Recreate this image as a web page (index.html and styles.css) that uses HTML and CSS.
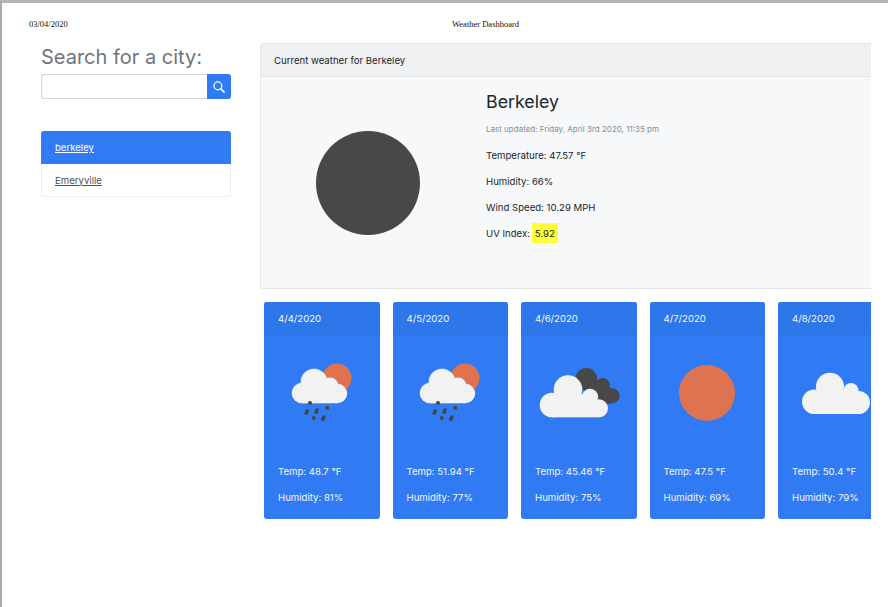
FILE: index.html
```html
<!DOCTYPE html>
<html lang="en">
<head>
  <meta charset="UTF-8">
  <title>Weather Dashboard</title>
  <link rel="stylesheet" href="styles.css">
</head>
<body>
  <svg class="defs" width="0" height="0" aria-hidden="true">
    <defs>
      <g id="sun-rain">
        <circle cx="50" cy="20" r="14.5" fill="#dd7350"/>
        <circle cx="27" cy="24" r="13.6" fill="#fff" opacity="0.5"/>
        <g fill="#f2f2f2">
          <circle cx="15" cy="35" r="10.3"/>
          <circle cx="27" cy="24" r="13"/>
          <circle cx="43" cy="28" r="8.5"/>
          <circle cx="50.5" cy="35.5" r="9.7"/>
          <rect x="15" y="30" width="35.5" height="15.3"/>
        </g>
        <g fill="#464649">
          <circle cx="23" cy="45" r="2"/>
          <rect x="18" y="51" width="3.4" height="6" rx="1.4" transform="rotate(25 19.7 54)"/>
          <rect x="28" y="50" width="3.4" height="6" rx="1.4" transform="rotate(25 29.7 53)"/>
          <circle cx="40.3" cy="49.7" r="2"/>
          <circle cx="26.7" cy="60" r="2"/>
          <rect x="34.6" y="57.3" width="3.4" height="6" rx="1.4" transform="rotate(25 36.3 60.3)"/>
        </g>
      </g>
    </defs>
  </svg>

  <header class="topbar">
    <span class="topbar-date">03/04/2020</span>
    <span class="topbar-title">Weather Dashboard</span>
  </header>

  <div class="page">
    <aside class="sidebar">
      <h2 class="search-title">Search for a city:</h2>
      <form class="search-row">
        <input class="search-input" type="text" aria-label="City">
        <button class="search-btn" type="button" aria-label="Search">
          <svg width="12" height="12" viewBox="0 0 16 16" fill="none" stroke="#fff" stroke-width="1.7" stroke-linecap="round">
            <circle cx="6.5" cy="6.5" r="5.2"/>
            <path d="M10.5 10.5 L15 15" stroke-width="2.1"/>
          </svg>
        </button>
      </form>
      <ul class="city-list">
        <li class="city city-active"><a href="#">berkeley</a></li>
        <li class="city"><a href="#">Emeryville</a></li>
      </ul>
    </aside>

    <main class="content">
      <section class="current">
        <div class="current-head">Current weather for Berkeley</div>
        <div class="current-body">
          <div class="current-icon">
            <svg width="106" height="106" viewBox="0 0 106 106"><circle cx="53" cy="53" r="52" fill="#48484a"/></svg>
          </div>
          <div class="current-info">
            <h3 class="city-name">Berkeley</h3>
            <p class="updated">Last updated: Friday, April 3rd 2020, 11:35 pm</p>
            <p class="stat">Temperature: 47.57 °F</p>
            <p class="stat">Humidity: 66%</p>
            <p class="stat">Wind Speed: 10.29 MPH</p>
            <p class="stat">UV Index: <span class="uv">5.92</span></p>
          </div>
        </div>
      </section>

      <section class="forecast">
        <article class="day">
          <div class="day-head">4/4/2020</div>
          <div class="day-icon">
            <svg width="70" height="70" viewBox="0 0 70 70"><use href="#sun-rain"/></svg>
          </div>
          <p class="day-stat">Temp: 48.7 °F</p>
          <p class="day-stat">Humidity: 81%</p>
        </article>
        <article class="day">
          <div class="day-head">4/5/2020</div>
          <div class="day-icon">
            <svg width="70" height="70" viewBox="0 0 70 70"><use href="#sun-rain"/></svg>
          </div>
          <p class="day-stat">Temp: 51.94 °F</p>
          <p class="day-stat">Humidity: 77%</p>
        </article>
        <article class="day">
          <div class="day-head">4/6/2020</div>
          <div class="day-icon">
            <svg width="90" height="70" viewBox="0 0 90 70">
              <g fill="#48484a">
                <circle cx="52.2" cy="21" r="11"/>
                <circle cx="68.8" cy="27" r="7"/>
                <circle cx="78.2" cy="37.7" r="7.5"/>
                <path d="M45 25 L68 22 L78 31 L78 45 L60 50 Z"/>
              </g>
              <g fill="#f2f2f2">
                <circle cx="18" cy="47" r="12.3"/>
                <circle cx="34" cy="31.6" r="14.3"/>
                <circle cx="56" cy="39" r="8.2"/>
                <circle cx="65" cy="50.3" r="9"/>
                <rect x="34" y="36" width="22" height="8"/>
                <rect x="18" y="42" width="47" height="17.3"/>
              </g>
            </svg>
          </div>
          <p class="day-stat">Temp: 45.46 °F</p>
          <p class="day-stat">Humidity: 75%</p>
        </article>
        <article class="day">
          <div class="day-head">4/7/2020</div>
          <div class="day-icon">
            <svg width="70" height="70" viewBox="0 0 70 70"><circle cx="35" cy="35" r="28" fill="#dd7350"/></svg>
          </div>
          <p class="day-stat">Temp: 47.5 °F</p>
          <p class="day-stat">Humidity: 69%</p>
        </article>
        <article class="day">
          <div class="day-head">4/8/2020</div>
          <div class="day-icon">
            <svg width="70" height="70" viewBox="0 0 70 70">
              <g fill="#f2f2f2">
                <circle cx="13.3" cy="43.7" r="12.3"/>
                <circle cx="29" cy="28.7" r="14"/>
                <circle cx="50" cy="32.5" r="7.5"/>
                <circle cx="57.5" cy="44.5" r="11.5"/>
                <rect x="13" y="32" width="37" height="24"/>
                <rect x="50" y="38" width="8" height="18"/>
              </g>
            </svg>
          </div>
          <p class="day-stat">Temp: 50.4 °F</p>
          <p class="day-stat">Humidity: 79%</p>
        </article>
      </section>
    </main>
  </div>
</body>
</html>
```

FILE: styles.css
```css
html, body {
  height: 100%;
}

body {
  margin: 0;
  box-sizing: border-box;
  background-color: #fff;
  border-top: 3px solid #b4b4b8;
  border-left: 2px solid #a9a9ac;
  color: #212529;
  font-family: Inter, "Noto Sans", sans-serif;
  overflow: hidden;
}

.defs {
  display: block;
  height: 0;
}

/* print header */
.topbar {
  display: flex;
  height: 40px;
  width: 869px;
  align-items: center;
  padding: 2px 0 0 27px;
  box-sizing: border-box;
  font-family: "Liberation Serif", serif;
  font-size: 8.5px;
  color: #111;
}

.topbar-date {
  width: 423px;
}

.page {
  display: flex;
  width: 869px;
  padding-left: 39px;
  box-sizing: border-box;
  overflow: hidden;
}

.sidebar {
  flex: 0 0 190px;
  min-width: 0;
  margin-right: 29px;
}

.search-title {
  margin: 0 0 3px;
  font-size: 20px;
  font-weight: 400;
  line-height: 28px;
  color: #6c757d;
}

.search-row {
  display: flex;
  height: 25px;
  margin-bottom: 32px;
}

.search-input {
  flex: 1;
  min-width: 0;
  padding: 0 8px;
  border: 1px solid #ced4da;
  border-right: none;
  border-radius: 3px 0 0 3px;
  background: #fff;
}

.search-btn {
  display: flex;
  width: 24px;
  padding: 0;
  align-items: center;
  justify-content: center;
  background-color: #307bf4;
  border: none;
  border-radius: 0 3px 3px 0;
}

.city-list {
  margin: 0;
  padding: 0;
  list-style: none;
  font-size: 9.6px;
}

.city {
  display: flex;
  height: 32px;
  padding: 0 13px;
  align-items: center;
  background-color: #fff;
  border: 1px solid #eceef0;
  border-top: none;
  border-radius: 0 0 3px 3px;
}

.city a {
  color: #495057;
}

.city-active {
  height: 33px;
  padding: 0 14px;
  background-color: #307bf4;
  border: none;
  border-radius: 3px 3px 0 0;
}

.city-active a {
  color: #fff;
}

.content {
  flex: 0 0 auto;
  width: 640px;
}

.current {
  height: 246px;
  background-color: #f7f8fa;
  border: 1px solid #e3e5e8;
  border-radius: 3px;
  box-sizing: border-box;
  margin-bottom: 13px;
}

.current-head {
  height: 32px;
  padding: 0 13px;
  line-height: 33px;
  font-size: 9.6px;
  background-color: #eff0f2;
  border-bottom: 1px solid #e3e5e8;
}

.current-body {
  display: flex;
}

.current-icon {
  display: flex;
  flex: 0 0 213px;
  height: 211px;
  margin-right: 12px;
  align-items: center;
  justify-content: center;
}

.current-info {
  padding-top: 14px;
}

.city-name {
  margin: 0 0 10px;
  font-size: 17.8px;
  font-weight: 400;
  line-height: 22px;
}

.updated {
  margin: 0 0 12px;
  font-size: 8px;
  line-height: 13px;
  color: #868e96;
}

.stat {
  margin: 0 0 11px;
  font-size: 9.6px;
  line-height: 15px;
}

.uv {
  padding: 5px 3px 4px;
  margin-left: -1px;
  background-color: #ffff3c;
}

.forecast {
  display: flex;
  gap: 13px;
  padding-left: 4px;
}

.day {
  flex: 0 0 115.5px;
  height: 217px;
  box-sizing: border-box;
  background-color: #307bf4;
  border-radius: 3px;
  color: #f4f7fd;
  font-size: 9.6px;
}

.day-head {
  height: 33px;
  padding: 0 14px;
  line-height: 33px;
  border-bottom: 1px solid #2f74e4;
  background-color: #2e77ea;
  border-radius: 3px 3px 0 0;
}

.day-icon {
  display: flex;
  height: 128px;
  align-items: center;
  justify-content: center;
  padding-bottom: 14px;
  box-sizing: border-box;
}

.day-stat {
  margin: 0 0 11px;
  padding: 0 14px;
  line-height: 15px;
}
```
